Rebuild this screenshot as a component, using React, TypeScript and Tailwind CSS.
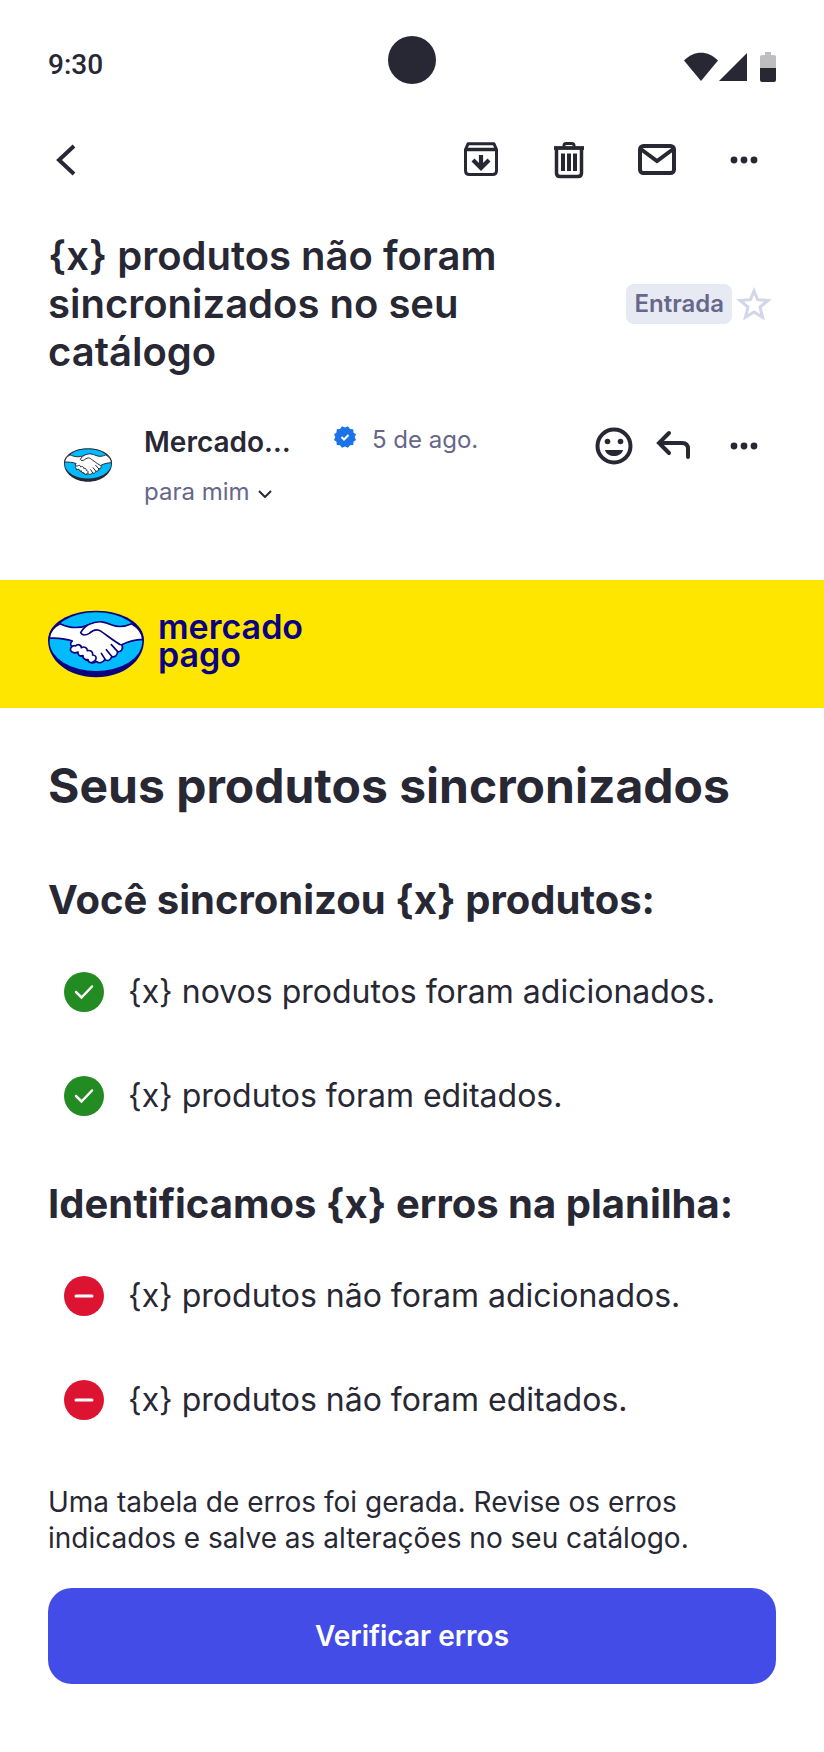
import type { ReactNode } from 'react';

const added = [
  '{x} novos produtos foram adicionados.',
  '{x} produtos foram editados.',
];

const failed = [
  '{x} produtos não foram adicionados.',
  '{x} produtos não foram editados.',
];

export default function App() {
  return (
    <div className="min-h-screen bg-white pb-[68px] font-['Inter',sans-serif] text-[#282834]">
      <StatusBar />
      <Toolbar />
      <MailHeader />
      <main>
        <Brand />
        <div className="px-12">
          <h1 className="mt-12 text-[48px] leading-[60px] font-bold">Seus produtos sincronizados</h1>

          <h2 className="mt-[60px] text-[40px] leading-[48px] font-bold">{'Você sincronizou {x} produtos:'}</h2>
          <ResultList items={added} icon={<CheckBadge />} />

          <h2 className="mt-16 text-[40px] leading-[48px] font-bold">{'Identificamos {x} erros na planilha:'}</h2>
          <ResultList items={failed} icon={<MinusBadge />} />

          <p className="mt-16 text-[28px] leading-[36px]">
            Uma tabela de erros foi gerada. Revise os erros indicados e salve as alterações no seu catálogo.
          </p>
          <button className="mt-8 h-24 w-full rounded-3xl bg-[#434ce6] text-[28px] font-semibold text-white">
            Verificar erros
          </button>
        </div>
      </main>
    </div>
  );
}

function StatusBar() {
  return (
    <div className="grid grid-cols-3 items-center px-12 pt-9">
      <span className="pt-2.5 font-['Roboto',sans-serif] text-[28px] leading-[38px] font-medium">9:30</span>
      <span className="size-12 justify-self-center rounded-full bg-[#282834]" />
      <svg className="mt-3.5 h-[30px] w-[92px] justify-self-end" viewBox="0 0 92 30" fill="#282834">
        <path d="M0 8.5C10-2 24-2 34 8.5L17 29Z" />
        <path d="M63 1v28H35Z" />
        <path d="M76 16V5a2 2 0 0 1 2-2h3V0h6v3h3a2 2 0 0 1 2 2v11Z" fill="#bebec1" />
        <path d="M76 16h16v12a2 2 0 0 1-2 2H78a2 2 0 0 1-2-2Z" />
      </svg>
    </div>
  );
}

function Toolbar() {
  return (
    <header className="mt-14 flex items-center justify-between pr-[60px] pl-12">
      <IconButton label="Voltar">
        <path d="M26 6 11 20l15 14" strokeWidth="4" />
      </IconButton>
      <div className="flex items-center gap-12">
        <IconButton label="Arquivar">
          <path d="M5.500 9.500v21q0 4 4 4h23q4 0 4-4v-21L34 3.800H8L5.500 9.500Z" strokeWidth="3" strokeLinejoin="round" />
          <path d="M5.500 9.500h31" strokeWidth="3.500" />
          <path d="M21 15v13M13 20l8 8 8-8" strokeWidth="4.200" />
        </IconButton>
        <IconButton label="Excluir">
          <path d="M6 8h30" strokeWidth="3.800" />
          <path d="M16 7V5.500q0-2 2-2h6q2 0 2 2V7" strokeWidth="3" />
          <path d="M8.500 9v24q0 3.500 3.500 3.500h18q3.500 0 3.500-3.500V9" strokeWidth="3.500" />
          <path d="M15 13.500V31M21 13.500V31M27 13.500V31" strokeWidth="4" />
        </IconButton>
        <IconButton label="Marcar como não lida">
          <rect x="4" y="6" width="34" height="27" rx="3.500" strokeWidth="4" />
          <path d="M4 8.500 21 21 38 8.500" strokeWidth="4" />
        </IconButton>
        <IconButton label="Mais opções">
          <Dots />
        </IconButton>
      </div>
    </header>
  );
}

function MailHeader() {
  return (
    <section className="px-12 pt-[52px] pb-[72px]">
      <div className="flex items-center justify-between">
        <p className="max-w-[500px] text-[40px] leading-[48px] font-semibold">
          {'{x} produtos não foram sincronizados no seu catálogo'}
        </p>
        <div className="flex items-center">
          <span className="rounded-lg bg-[#e7e9f3] px-2 text-[24px] leading-[40px] font-semibold text-[#66678b]">
            Entrada
          </span>
          <button aria-label="Favoritar" className="mr-1 ml-1">
            <svg className="size-9" viewBox="0 0 36 36" fill="none" stroke="#d3d6e8" strokeWidth="3">
              <path d="m18 5 3.600 8.700 10.400.8-8 6.600 2.600 10.200L18 26l-8.600 5.300L12 21.100l-8-6.600 10.400-.8Z" />
            </svg>
          </button>
        </div>
      </div>

      <div className="mt-12 flex items-start justify-between pr-3">
        <div className="flex items-start">
          <Handshake className="mt-6 ml-4 h-[34px] w-12" dark="#282834" line={6} />
          <div className="ml-8">
            <div className="flex items-start">
              <span className="w-[190px] text-[28px] leading-[36px] font-semibold">Mercado…</span>
              <VerifiedBadge />
              <span className="ml-4 text-[24px] leading-[32px] text-[#66678b]">5 de ago.</span>
            </div>
            <button className="mt-4 flex items-center gap-2 text-[24px] leading-[32px] text-[#66678b]">
              para mim
              <svg className="mt-1 h-2 w-3.5" viewBox="0 0 14 8" fill="none" stroke="#282834" strokeWidth="2">
                <path d="m1 1 6 6 6-6" />
              </svg>
            </button>
          </div>
        </div>
        <div className="mt-0.5 flex items-center">
          <IconButton label="Reagir">
            <circle cx="20" cy="20" r="16.500" strokeWidth="4" />
            <g fill="currentColor" stroke="none">
              <circle cx="13.500" cy="15.500" r="2.800" />
              <circle cx="26.500" cy="15.500" r="2.800" />
              <path d="M11 24h18c-2 8-16 8-18 0Z" />
            </g>
          </IconButton>
          <span className="ml-5">
            <IconButton label="Responder">
              <path d="M15 7 5 17l10 10M5 17h23q6 0 6 6v8" strokeWidth="4" strokeLinecap="round" />
            </IconButton>
          </span>
          <span className="ml-[30px]">
            <IconButton label="Mais opções da mensagem">
              <Dots />
            </IconButton>
          </span>
        </div>
      </div>
    </section>
  );
}

function Brand() {
  return (
    <div className="flex h-32 items-center bg-[#ffe600] px-12">
      <Handshake className="h-[68px] w-24" dark="#0a0080" line={5} />
      <p className="mb-1.5 ml-3.5 text-[34px] leading-[28px] font-semibold text-[#0a0080]">
        mercado
        <br />
        pago
      </p>
    </div>
  );
}

function ResultList({ items, icon }: { items: string[]; icon: ReactNode }) {
  return (
    <ul className="mt-12 space-y-16 px-4">
      {items.map((item) => (
        <li key={item} className="flex items-center gap-6 text-[32px] leading-[40px]">
          {icon}
          {item}
        </li>
      ))}
    </ul>
  );
}

function IconButton({ label, children }: { label: string; children: ReactNode }) {
  return (
    <button aria-label={label} className="block">
      <svg className="size-10" viewBox="0 0 40 40" fill="none" stroke="currentColor">
        {children}
      </svg>
    </button>
  );
}

function Dots() {
  return (
    <g fill="currentColor" stroke="none">
      <circle cx="10" cy="20" r="3.400" />
      <circle cx="20" cy="20" r="3.400" />
      <circle cx="30" cy="20" r="3.400" />
    </g>
  );
}

function CheckBadge() {
  return (
    <svg className="size-10 shrink-0" viewBox="0 0 40 40" fill="none">
      <circle cx="20" cy="20" r="20" fill="#228b22" />
      <path d="m12 20 5.500 5.500L28 14.500" stroke="#fff" strokeWidth="2.500" strokeLinecap="round" />
    </svg>
  );
}

function MinusBadge() {
  return (
    <svg className="size-10 shrink-0" viewBox="0 0 40 40" fill="none">
      <circle cx="20" cy="20" r="20" fill="#dc1432" />
      <path d="M12 20h16" stroke="#fff" strokeWidth="3" strokeLinecap="round" />
    </svg>
  );
}

function VerifiedBadge() {
  return (
    <svg className="mt-0.5 size-[22px]" viewBox="0 0 22 22" fill="none">
      <path
        d="m11 1.500 3-1.200 2 2.600 3.200.3.300 3.200L22 8.500 20.700 11l1.300 3-2.500 1.800-.3 3.200-3.200.3-2 2.500-3-1.300-3 1.300-2-2.500-3.200-.3-.3-3.200L0 14l1.300-3L0 8.500l2.500-2.100.3-3.200L6 2.900 8 .3Z"
        fill="#1a73e8"
      />
      <path d="m7.500 11 2.500 2.500L14.500 9" stroke="#fff" strokeWidth="2" />
    </svg>
  );
}

function Handshake({ className, dark, line }: { className: string; dark: string; line: number }) {
  return (
    <svg className={className} viewBox="24 31 288 202" fill="none" strokeLinecap="round" strokeLinejoin="round">
      <path d="M24 121C24 70 88 32 168 32s144 38 144 89c0 61-61 111-144 111S24 182 24 121Z" fill={dark} />
      <ellipse cx="168" cy="125" rx="139" ry="88" fill="#00bcff" />
      <path
        d="M60 71c28 13 56 17 86 3 30-15 50-8 70 1 22 9 39 5 59-4 20 12 33 29 33 47-24 1-42 6-63 16 7 12-2 23-12 21-1 11-8 17-18 15-2 11-13 14-21 9-5 10-18 12-25 5-6 6-19 7-23-3-9 1-15-5-15-12-10 1-16-5-16-13-13 1-19-5-17-15-9-4-7-14-1-18-25-9-43-8-69-9 1-17 14-34 32-43Z"
        fill="#fff"
        stroke={dark}
        strokeWidth={line}
      />
      <path
        d="M152 71c-14 5-24 16-30 27 4 9 15 9 26 2 9-8 19-13 29-9 9 3 43 32 64 43"
        fill="#fff"
        stroke={dark}
        strokeWidth={line}
      />
      <path d="m214 134 19 21M199 149l16 20M184 160l12 19" stroke={dark} strokeWidth={line} />
      <path
        d="M98 157c-14-7-3-23 9-19 5-7 17-4 17 5 9-5 18 0 18 9 11-2 17 4 16 13 11 0 13 10 7 17-9 9-20 7-21-3-10 1-16-5-15-12-10 2-17-3-15-11-6 3-11 4-16 1Z"
        fill="#fff"
        stroke={dark}
        strokeWidth={line}
      />
    </svg>
  );
}
